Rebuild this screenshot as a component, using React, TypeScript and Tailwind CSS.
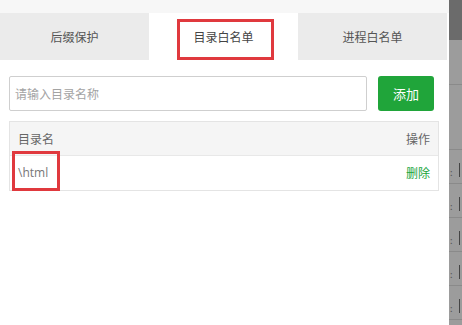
import React from 'react';

const tabs = ['后缀保护', '目录白名单', '进程白名单'];

const SideStrip: React.FC = () => (
  <div className="flex w-[13px] shrink-0 flex-col bg-[#9c9c9c]">
    <div className="h-[40px] bg-[#6b6b6b]" />
    <div className="h-[45px] border-b border-[#8a8a8a]" />
    <div className="h-[65px] border-b border-[#8a8a8a]" />
    {[0, 1, 2, 3, 4].map((i) => (
      <div key={i} className="flex h-[34px] items-end justify-between border-b border-[#8a8a8a] pb-[6px] pl-[1px] pr-[2px]">
        <span className="text-[9px] leading-none text-[#555]">:</span>
        <span className="h-[14px] w-[1px] bg-[#444]" />
      </div>
    ))}
  </div>
);

export default function App() {
  return (
    <div
      className="flex h-[325px] w-[462px] overflow-hidden bg-white"
      style={{ fontFamily: '"Noto Sans CJK SC", "Noto Sans", sans-serif' }}
    >
      <div className="flex w-[449px] flex-col">
        <div className="h-[13px] bg-[#f7f7f7]" />

        <div className="flex h-[47px] w-[448px]">
          {tabs.map((t, i) => (
            <div
              key={t}
              className={
                i === 1
                  ? 'relative flex w-[149px] items-center justify-center bg-white text-[12px] text-[#444]'
                  : 'flex w-[149px] items-center justify-center bg-[#ebebeb] text-[12px] text-[#555]'
              }
            >
              {t}
              {i === 1 && (
                <div className="absolute left-[28px] top-[6px] h-[41px] w-[97px] border-[3px] border-[#e0393e]" />
              )}
            </div>
          ))}
        </div>

        <div className="flex items-center pl-[9px] pt-[16px]">
          <div className="flex h-[35px] w-[358px] items-center rounded-[2px] border border-[#cfcfcf] px-[5px] text-[12px] text-[#a3a3a3]">
            请输入目录名称
          </div>
          <button className="ml-[11px] h-[35px] w-[56px] rounded-[3px] bg-[#20a53a] text-[13px] text-white">
            添加
          </button>
        </div>

        <div className="ml-[9px] mt-[10px] w-[430px] border border-[#e4e4e4]">
          <div className="flex h-[34px] items-center justify-between border-b border-[#e8e8e8] bg-[#f5f5f5] px-[8px] text-[12px] text-[#666]">
            <span>目录名</span>
            <span>操作</span>
          </div>
          <div className="relative flex h-[34px] items-center justify-between px-[8px] text-[12px]">
            <span className="text-[#777]" style={{ fontFamily: '"Open Sans", "Noto Sans", sans-serif' }}>\html</span>
            <span className="text-[#20a53a]">删除</span>
            <div className="absolute left-[2px] top-[-5px] h-[40px] w-[48px] border-[3px] border-[#e0393e]" />
          </div>
        </div>
      </div>
      <SideStrip />
    </div>
  );
}
